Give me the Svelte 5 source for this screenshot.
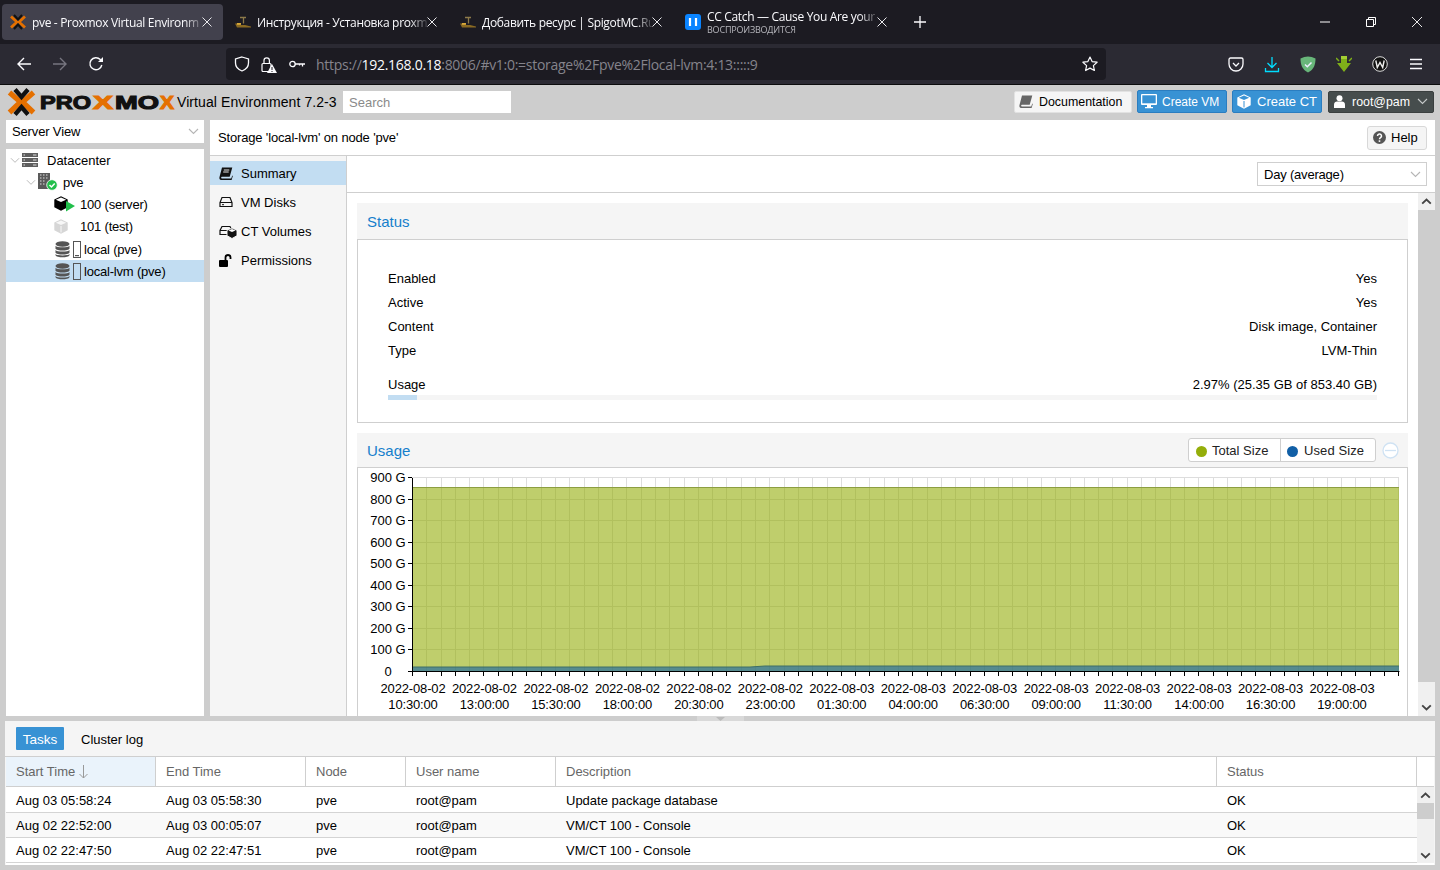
<script>
  const tabs = [
    { title: 'pve - Proxmox Virtual Environm', icon: 'px', active: true },
    { title: 'Инструкция - Установка proxm', icon: 'crane' },
    { title: 'Добавить ресурс | SpigotMC.Ru', icon: 'crane' },
    { title: 'CC Catch — Cause You Are your', sub: 'ВОСПРОИЗВОДИТСЯ', icon: 'pause' }
  ];
  const tree = [
    { label: 'Datacenter', level: 'l0', icon: 'dc' },
    { label: 'pve', level: 'l1', icon: 'node' },
    { label: '100 (server)', level: 'l2', icon: 'vm' },
    { label: '101 (test)', level: 'l2', icon: 'vmoff' },
    { label: 'local (pve)', level: 'l2', icon: 'st1' },
    { label: 'local-lvm (pve)', level: 'l2', icon: 'st2', selected: true }
  ];
  const nav = [
    { label: 'Summary', icon: 'book', active: true },
    { label: 'VM Disks', icon: 'hdd' },
    { label: 'CT Volumes', icon: 'ctv' },
    { label: 'Permissions', icon: 'unlock' }
  ];
  const status = [
    ['Enabled', 'Yes'],
    ['Active', 'Yes'],
    ['Content', 'Disk image, Container'],
    ['Type', 'LVM-Thin']
  ];
  const columns = [
    { label: 'Start Time', sorted: true },
    { label: 'End Time' },
    { label: 'Node' },
    { label: 'User name' },
    { label: 'Description' },
    { label: 'Status' }
  ];
  const tasks = [
    ['Aug 03 05:58:24', 'Aug 03 05:58:30', 'pve', 'root@pam', 'Update package database', 'OK'],
    ['Aug 02 22:52:00', 'Aug 03 00:05:07', 'pve', 'root@pam', 'VM/CT 100 - Console', 'OK'],
    ['Aug 02 22:47:50', 'Aug 02 22:47:51', 'pve', 'root@pam', 'VM/CT 100 - Console', 'OK']
  ];
  const labels = [
    ['2022-08-02', '10:30:00'], ['2022-08-02', '13:00:00'], ['2022-08-02', '15:30:00'],
    ['2022-08-02', '18:00:00'], ['2022-08-02', '20:30:00'], ['2022-08-02', '23:00:00'],
    ['2022-08-03', '01:30:00'], ['2022-08-03', '04:00:00'], ['2022-08-03', '06:30:00'],
    ['2022-08-03', '09:00:00'], ['2022-08-03', '11:30:00'], ['2022-08-03', '14:00:00'],
    ['2022-08-03', '16:30:00'], ['2022-08-03', '19:00:00']
  ];
  const x0 = 412.5, xStep = 14.295, y0 = 671.5, yStep = 21.53;
  const xTicks = Array.from({ length: 70 }, (_, i) => Math.round(x0 + i * xStep - 0.5) + 0.5);
  const yTicks = Array.from({ length: 10 }, (_, i) => ({
    y: Math.round(y0 - i * yStep - 0.5) + 0.5,
    label: i === 0 ? '0' : i * 100 + ' G'
  }));
</script>

{#snippet chev(cls)}
  <svg class={cls} width="11" height="7" viewBox="0 0 11 7"><path d="M1 1l4.500 4.500L10 1" fill="none" stroke="currentColor" stroke-width="1.100"/></svg>
{/snippet}
{#snippet scrollArrow(up)}
  <svg width="11" height="7" viewBox="0 0 11 7"><path d={up ? 'M1.200 5.600l4.300-4.100 4.300 4.100' : 'M1.200 1.400l4.300 4.100 4.300-4.100'} fill="none" stroke="#444" stroke-width="1.900"/></svg>
{/snippet}
{#snippet cube(color, bg)}
  <svg width="14" height="15" viewBox="0 0 14 15">
    <path d="M7 .3l6.700 3.200v7.800L7 14.800.3 11.300V3.500z" fill={color}/>
    <path d="M1.800 3.700L7 1.600l5.200 2.100L7 6z" fill={bg}/>
    <path d="M7 7v6.400" stroke={bg} stroke-width="1"/>
  </svg>
{/snippet}
{#snippet db()}
  <svg width="15" height="17" viewBox="0 0 15 17">
    <ellipse cx="7.500" cy="3" rx="7" ry="2.800" fill="#555"/>
    <path d="M.5 4.700c1 2 13 2 14 0v3c-1 2.400-13 2.400-14 0zM.5 9c1 2 13 2 14 0v2.700c-1 2.400-13 2.400-14 0zM.5 12.900c1 2 13 2 14 0v1.300c-1 2.700-13 2.700-14 0z" fill="#555"/>
  </svg>
{/snippet}
{#snippet treeIcon(name)}
  {#if name === 'dc'}
    <svg width="16" height="14" viewBox="0 0 16 14">
      <rect x="0" y="0" width="16" height="4" fill="#5f5f5f"/><rect x="0" y="5" width="16" height="4" fill="#5f5f5f"/><rect x="0" y="10" width="16" height="4" fill="#5f5f5f"/>
      <path d="M11 2h3.500M11 7h3.500M11 12h3.500M1.500 2h1.500M1.500 7h1.500M1.500 12h1.500" stroke="#ddd" stroke-width="1"/>
    </svg>
  {:else if name === 'node'}
    <svg width="20" height="18" viewBox="0 0 20 18">
      <rect x="0" y="0" width="12" height="16" fill="#5a5a5a"/>
      <path d="M2 2h1.500M5 2h1.500M8 2h1.500M2 5h1.500M5 5h1.500M8 5h1.500M2 8h1.500M5 8h1.500M2 11h1.500M5 11h1.500" stroke="#ddd" stroke-width="1.200"/>
      <circle cx="14" cy="12" r="5.300" fill="#21bf4b" stroke="#fff" stroke-width=".8"/>
      <path d="M11.500 12l2 2 3.200-3.600" fill="none" stroke="#fff" stroke-width="1.500"/>
    </svg>
  {:else if name === 'vm'}
    <svg width="22" height="16" viewBox="0 0 22 16">
      <path d="M7 .3l6.700 3.200v7.800L7 14.800.3 11.300V3.500z" fill="#000"/>
      <path d="M1.800 3.700L7 1.600l5.200 2.100L7 6z" fill="#fff"/>
      <path d="M12 5l9 5-9 5.600z" fill="#21bf4b"/>
    </svg>
  {:else if name === 'vmoff'}
    {@render cube('#d6d6d6', '#f7f7f7')}
  {:else}
    <span class="storage">
      {@render db()}
      <svg class="disk" width="8" height="17" viewBox="0 0 8 17">
        <rect x=".5" y=".5" width="7" height="16" fill="none" stroke="#555"/>
        {#if name === 'st1'}<rect x="2" y="14" width="4" height="1.200" fill="#555"/>{/if}
      </svg>
    </span>
  {/if}
{/snippet}
{#snippet navIcon(name)}
  {#if name === 'book'}
    <svg width="14" height="13" viewBox="0 0 14 13"><path d="M3 .5h10.300l-2.600 9.300H2.900c-1 0-1 1.700 0 1.700h9.400l.9-3 .6.400-1.200 4H2.300C.6 13 .1 11.300.5 9.900z" fill="#111"/><path d="M4.800 3h5.500M4.200 5h5.500" stroke="#fff" stroke-width=".9"/></svg>
  {:else if name === 'hdd'}
    <svg width="14" height="12" viewBox="0 0 14 12"><path d="M3 1.500h8l2 5v4H1v-4zM1 6.500h12" fill="none" stroke="#111" stroke-width="1.200"/><path d="M3 8.700h2" stroke="#111"/></svg>
  {:else if name === 'ctv'}
    <svg width="19" height="15" viewBox="0 0 19 15"><path d="M3 2.500h8l2 4v4H1v-4zM1 6.500h12" fill="none" stroke="#111" stroke-width="1.200"/><path d="M13 4l5 2.300v5.400L13 14.500l-5-2.800V6.300z" fill="#111" stroke="#fff" stroke-width=".9"/><path d="M9.500 6.500L13 5l3.500 1.500L13 8z" fill="#fff"/></svg>
  {:else}
    <svg width="14" height="13" viewBox="0 0 14 13"><rect x="0" y="6" width="9" height="7" rx="1" fill="#000"/><path d="M6.500 6V3.500a2.500 2.500 0 0 1 5 0v1.500" fill="none" stroke="#000" stroke-width="1.800"/></svg>
  {/if}
{/snippet}

<div class="app">
  <div class="tabstrip">
    {#each tabs as t}
      <div class="tab" class:active={t.active}>
        {#if t.icon === 'px'}
          <svg class="fav" width="16" height="16" viewBox="0 0 16 16"><path d="M1 2.500L7 8l-6 5.500M15 2.500L9 8l6 5.500" fill="none" stroke="#e57000" stroke-width="2.800"/><path d="M4 1l4 4.500L12 1M4 15l4-4.500L12 15" fill="none" stroke="#111" stroke-width="2"/></svg>
        {:else if t.icon === 'crane'}
          <svg class="fav" width="16" height="16" viewBox="0 0 16 16"><path d="M5 3.500h6M8.500 3.500v6" stroke="#8d7a4a" stroke-width="1.300"/><path d="M0 9.500h4l2 1.500h4l6 1.500v1H2z" fill="#8a6a22"/><rect x="2" y="9" width="4" height="1.800" fill="#d9a93a"/></svg>
        {:else}
          <svg class="fav" width="16" height="16" viewBox="0 0 16 16"><rect width="16" height="16" rx="3" fill="#0a84ff"/><path d="M5 4v8M11 4v8" stroke="#fff" stroke-width="2.200"/></svg>
        {/if}
        <div class="tabtext">
          <div class="tabtitle">{t.title}</div>
          {#if t.sub}<div class="tabsub">{t.sub}</div>{/if}
        </div>
        <svg class="tabclose" width="16" height="16" viewBox="0 0 16 16"><path d="M3.500 3.500l9 9M12.500 3.500l-9 9" stroke="#e8e8ec" stroke-width="1"/></svg>
      </div>
    {/each}
    <div class="newtab"><svg width="14" height="14" viewBox="0 0 14 14"><path d="M7 1v12M1 7h12" stroke="#fbfbfe" stroke-width="1.300"/></svg></div>
    <div class="winbtns">
      <div class="winbtn"><svg width="12" height="12" viewBox="0 0 12 12"><path d="M1 6h10" stroke="#fff"/></svg></div>
      <div class="winbtn"><svg width="12" height="12" viewBox="0 0 12 12"><path d="M1.500 3.500h7v7h-7zM3.500 3V1.500h7v7H9" fill="none" stroke="#fff"/></svg></div>
      <div class="winbtn"><svg width="12" height="12" viewBox="0 0 12 12"><path d="M1 1l10 10M11 1L1 11" stroke="#fff" stroke-width=".9"/></svg></div>
    </div>
  </div>

  <div class="toolbar">
    <div class="tbtn"><svg width="16" height="16" viewBox="0 0 16 16"><path d="M15 8H2M8 2L2 8l6 6" fill="none" stroke="#fbfbfe" stroke-width="1.400"/></svg></div>
    <div class="tbtn"><svg width="16" height="16" viewBox="0 0 16 16"><path d="M1 8h13M8 2l6 6-6 6" fill="none" stroke="#777680" stroke-width="1.400"/></svg></div>
    <div class="tbtn"><svg width="16" height="16" viewBox="0 0 16 16"><path d="M13.800 9a6 6 0 1 1-1.500-5.400L14 5.300" fill="none" stroke="#fbfbfe" stroke-width="1.400"/><path d="M15 1v5h-5z" fill="#fbfbfe"/></svg></div>
    <div class="urlbar">
      <svg class="u1" width="16" height="16" viewBox="0 0 16 16"><path d="M8 1l6.500 2v4c0 4-3 6.700-6.500 8-3.500-1.300-6.500-4-6.500-8V3z" fill="none" stroke="#fbfbfe" stroke-width="1.300"/></svg>
      <svg class="u2" width="16" height="17" viewBox="0 0 16 17"><rect x="1" y="7.500" width="9" height="8" rx="1" fill="none" stroke="#fbfbfe" stroke-width="1.200"/><path d="M3 7.500V4.500a2.700 2.700 0 0 1 5.400 0v3" fill="none" stroke="#fbfbfe" stroke-width="1.200"/><path d="M11 8l5 9H6z" fill="#fbfbfe"/><path d="M11 11v3M11 15v1" stroke="#1c1b22"/></svg>
      <svg class="u3" width="16" height="10" viewBox="0 0 16 10"><circle cx="3.500" cy="5" r="2.700" fill="none" stroke="#fbfbfe" stroke-width="1.300"/><path d="M6 5h10M13.500 5v2.500M10.500 5v1.500" stroke="#fbfbfe" stroke-width="1.300"/></svg>
      <div class="urltext">https://<span>192.168.0.18</span>:8006/#v1:0:=storage%2Fpve%2Flocal-lvm:4:13:::::9</div>
      <svg class="star" width="16" height="16" viewBox="0 0 16 16"><path d="M8 1l2.100 4.600 5 .6-3.700 3.400 1 4.900L8 12.100l-4.400 2.400 1-4.900L.9 6.200l5-.6z" fill="none" stroke="#fbfbfe" stroke-width="1.200" stroke-linejoin="round"/></svg>
    </div>
    <div class="tools">
      <div class="tool"><svg width="16" height="15" viewBox="0 0 16 15"><path d="M2.500 1h11c.8 0 1.500.7 1.500 1.500V7a7 7 0 0 1-14 0V2.500C1 1.700 1.700 1 2.500 1z" fill="none" stroke="#fbfbfe" stroke-width="1.300"/><path d="M5 6l3 3 3-3" fill="none" stroke="#fbfbfe" stroke-width="1.300"/></svg></div>
      <div class="tool"><svg width="16" height="17" viewBox="0 0 16 17"><path d="M8 1v10M3.500 7L8 11.500 12.500 7M1.500 12v3.500h13V12" fill="none" stroke="#00ddff" stroke-width="1.300"/></svg></div>
      <div class="tool"><svg width="16" height="17" viewBox="0 0 16 17"><path d="M8 .5c2.500 0 5 .8 7.500 2 0 6-1.500 11-7.500 14C2 13.500.5 8.500.5 2.500 3 1.300 5.500.5 8 .5z" fill="#68b67a"/><path d="M5 8.500l2.300 2.300L11.500 6.500" fill="none" stroke="#eef" stroke-width="1.500"/></svg></div>
      <div class="tool"><svg width="16" height="17" viewBox="0 0 16 17"><path d="M5 0h6v7h4l-7 9-7-9h4z" fill="#7fb019"/><path d="M0 2l3 3M16 2l-3 3" stroke="#7fb019" stroke-width="1.500"/><path d="M5 0h6v3H5z" fill="#a4cf33"/></svg></div>
      <div class="tool"><svg width="16" height="16" viewBox="0 0 16 16"><circle cx="8" cy="8" r="7.300" fill="#111" stroke="#ddd" stroke-width="1"/><path d="M3.800 4.500l1.500 7 2.700-5 2.700 5 1.500-7" fill="none" stroke="#eee" stroke-width="1.400"/></svg></div>
      <div class="tool"><svg width="14" height="12" viewBox="0 0 14 12"><path d="M1 1.500h12M1 6h12M1 10.500h12" stroke="#fbfbfe" stroke-width="1.300"/></svg></div>
    </div>
  </div>

  <header class="pxhead">
    <svg class="logo" width="170" height="30" viewBox="0 0 170 30">
      <path d="M2.500 5.500L13.500 15 2.500 25.500M26.500 5.500L15.500 15l11 10.500" fill="none" stroke="#e57000" stroke-width="5.300"/>
      <path d="M8 2.500l6.500 7.500L21 2.500M8 27.500l6.500-7.500 6.500 7.500" fill="none" stroke="#111" stroke-width="4.300"/>
      <text x="33" y="22" class="lg" textLength="51" lengthAdjust="spacingAndGlyphs">PRO</text>
      <text x="86" y="22" class="lg or" textLength="20" lengthAdjust="spacingAndGlyphs">X</text>
      <text x="108" y="22" class="lg" textLength="44" lengthAdjust="spacingAndGlyphs">MO</text>
      <text x="153" y="22" class="lg or" textLength="14" lengthAdjust="spacingAndGlyphs">X</text>
    </svg>
    <div class="version">Virtual Environment 7.2-3</div>
    <div class="search">Search</div>
    <div class="hbtns">
      <div class="hbtn doc">
        <svg width="14" height="13" viewBox="0 0 14 13"><path d="M3 .5h10.300l-2.600 9.300H2.900c-1 0-1 1.700 0 1.700h9.400l.9-3 .6.400-1.200 4H2.300C.6 13 .1 11.300.5 9.900z" fill="#666"/></svg>
        Documentation
      </div>
      <div class="hbtn blue">
        <svg width="16" height="15" viewBox="0 0 16 15"><rect x="0" y="0" width="16" height="11" rx="1" fill="#fff"/><rect x="1.300" y="1.300" width="13.400" height="8" fill="#3892d4"/><path d="M6 11h4v2h2v1.300H4V13h2z" fill="#fff"/></svg>
        Create VM
      </div>
      <div class="hbtn blue ct">
        {@render cube('#fff', '#3892d4')}
        Create CT
      </div>
      <div class="hbtn user">
        <svg width="11" height="13" viewBox="0 0 11 13"><circle cx="5.500" cy="3.200" r="3" fill="#fff"/><path d="M0 13V9.500C0 7.500 1.500 6.500 3 6.500h5c1.500 0 3 1 3 3V13z" fill="#fff"/></svg>
        <span>root@pam</span>
        {@render chev('userchev')}
      </div>
    </div>
  </header>

  <div class="workspace">
    <aside class="left">
      <div class="viewsel"><span>Server View</span>{@render chev('selchev')}</div>
      <div class="tree">
        {#each tree as n}
          <div class="node {n.level}" class:selected={n.selected}>
            {#if n.level !== 'l2'}<span class="exp">{@render chev('treechev')}</span>{/if}
            <span class="ticon {n.icon}">{@render treeIcon(n.icon)}</span>
            <span>{n.label}</span>
          </div>
        {/each}
      </div>
    </aside>

    <section class="content">
      <div class="title">
        <span class="ttext">Storage 'local-lvm' on node 'pve'</span>
        <div class="help">
          <svg width="13" height="13" viewBox="0 0 13 13"><circle cx="6.500" cy="6.500" r="6.500" fill="#555"/><path d="M4.500 5a2 2 0 1 1 3 1.700c-.7.400-1 .8-1 1.500" fill="none" stroke="#fff" stroke-width="1.500"/><rect x="5.700" y="9.300" width="1.600" height="1.600" fill="#fff"/></svg>
          Help
        </div>
      </div>
      <div class="cbody">
        <nav class="nav">
          {#each nav as item}
            <div class="navitem" class:active={item.active}>
              <span class="navicon">{@render navIcon(item.icon)}</span>
              {item.label}
            </div>
          {/each}
        </nav>
        <div class="main">
          <div class="mtool">
            <div class="rangesel"><span>Day (average)</span>{@render chev('selchev')}</div>
          </div>
          <div class="mscroll">
            <div class="panels">
              <div class="phead"><span class="ptitle">Status</span></div>
              <div class="statusbody">
                {#each status as [k, v]}
                  <div class="srow"><span>{k}</span><span>{v}</span></div>
                {/each}
                <div class="srow usage"><span>Usage</span><span>2.97% (25.35 GB of 853.40 GB)</span></div>
                <div class="progress"><div class="fill" style="width:2.97%"></div></div>
              </div>
              <div class="phead usagehead">
                <span class="ptitle">Usage</span>
                <div class="legend">
                  <div class="lg1"><i class="dot green"></i>Total Size</div>
                  <div class="lg2"><i class="dot bluedot"></i>Used Size</div>
                </div>
                <svg class="ctool" width="17" height="17" viewBox="0 0 17 17"><circle cx="8.500" cy="8.500" r="7.500" fill="#fff" stroke="#cfe2f3" stroke-width="1.300"/><path d="M3 8.500h11" stroke="#cfe2f3" stroke-width="1.300"/></svg>
              </div>
              <div class="chartbody">
                <svg class="chart" width="1049" height="248" viewBox="358 468 1049 248">
                  {#each yTicks as t}
                    <line x1="412" x2="1399" y1={t.y} y2={t.y} stroke="#ddd"/>
                    <line x1="408" x2="412" y1={t.y} y2={t.y} stroke="#000"/>
                    <text x="388" y={t.y + 4.500} text-anchor="middle" class="ct">{t.label}</text>
                  {/each}
                  {#each xTicks as x}
                    <line x1={x} x2={x} y1="478" y2="671" stroke="#ddd"/>
                    <line x1={x} x2={x} y1="671" y2="676" stroke="#000"/>
                  {/each}
                  <path d="M412.500 487.500H1399V671.500H412.500z" fill="#94ae0a" fill-opacity=".6"/>
                  <path d="M412.500 487.500H1399" stroke="#8c9e40" stroke-width="1"/>
                  <path d="M412.500 667H750L765 666H1399V671.500H412.500z" fill="#115fa6" fill-opacity=".6"/>
                  <path d="M412.500 667H750L765 666H1399" stroke="#3f6f66" fill="none"/>
                  <line x1="412.500" x2="412.500" y1="478" y2="672" stroke="#000"/>
                  <line x1="412" x2="1399.500" y1="671.500" y2="671.500" stroke="#000"/>
                  {#each labels as [d, t], i}
                    <text x={413 + i * 71.46} y="693" text-anchor="middle" class="ct xl">{d}</text>
                    <text x={413 + i * 71.46} y="709" text-anchor="middle" class="ct xl">{t}</text>
                  {/each}
                </svg>
              </div>
            </div>
            <div class="vscroll main-sb">
              <div class="sbtn">{@render scrollArrow(true)}</div>
              <div class="thumb t1"></div>
              <div class="sbtn">{@render scrollArrow(false)}</div>
            </div>
          </div>
        </div>
      </div>
    </section>
  </div>

  <div class="splitter"><div class="handle"><svg width="9" height="4" viewBox="0 0 9 4"><path d="M0 0h9L4.500 4z" fill="#bbb"/></svg></div></div>

  <section class="bottom">
    <div class="btabs">
      <div class="btab on">Tasks</div>
      <div class="btab">Cluster log</div>
    </div>
    <div class="ghead">
      {#each columns as c}
        <div class="gh" class:sorted={c.sorted}>
          {c.label}
          {#if c.sorted}<svg width="9" height="14" viewBox="0 0 9 14"><path d="M4.500 0v13M.5 9l4 4 4-4" fill="none" stroke="#999" stroke-width="1"/></svg>{/if}
        </div>
      {/each}
      <div class="ghfill"></div>
    </div>
    <div class="gbody">
      <div class="rows">
        {#each tasks as row, i}
          <div class="grow" class:alt={i === 1}>
            {#each row as cell}<div class="gc">{cell}</div>{/each}
          </div>
        {/each}
      </div>
      <div class="vscroll grid-sb">
        <div class="sbtn s16">{@render scrollArrow(true)}</div>
        <div class="thumb t2"></div>
        <div class="track"></div>
        <div class="sbtn s16">{@render scrollArrow(false)}</div>
      </div>
    </div>
  </section>
</div>

<style>
  :global(body) { margin: 0; background: #cdcdcd; }
  .app { width: 1440px; height: 870px; overflow: hidden; display: flex; flex-direction: column; background: #cdcdcd; font: 13px "Liberation Sans", Arial, sans-serif; color: #000; }

  .tabstrip { height: 44px; flex: none; background: #1c1b22; display: flex; padding-left: 2px; gap: 4px; box-sizing: border-box; color: #fbfbfe; font-family: "Open Sans", sans-serif; }
  .tab { width: 221px; height: 36px; margin-top: 4px; border-radius: 4px; display: flex; align-items: center; box-sizing: border-box; padding: 0 8px; }
  .tab.active { background: #42414d; }
  .fav { flex: none; margin-right: 6px; }
  .tabtext { flex: 1; min-width: 0; margin-right: -6px; padding-top: 1px; overflow: hidden; white-space: nowrap; mask-image: linear-gradient(to right, #000 88%, transparent 100%); -webkit-mask-image: linear-gradient(to right, #000 88%, transparent 100%); }
  .tabtitle { font-size: 12px; line-height: 16px; letter-spacing: -.33px; }
  .tabsub { font-size: 9px; line-height: 10px; color: #b5b5bb; margin-bottom: 1px; letter-spacing: -.2px; }
  .tabclose { flex: none; position: relative; }
  .newtab { width: 36px; height: 36px; margin-top: 4px; display: flex; align-items: center; justify-content: center; }
  .winbtns { margin-left: auto; display: flex; }
  .winbtn { width: 46px; height: 44px; display: flex; align-items: center; justify-content: center; }

  .toolbar { height: 41px; flex: none; box-sizing: border-box; background: #2b2a33; border-bottom: 1px solid #0c0c0d; display: flex; align-items: flex-start; padding-left: 6px; color: #fbfbfe; font-family: "Open Sans", sans-serif; }
  .tbtn { width: 36px; height: 40px; display: flex; align-items: center; justify-content: center; }
  .urlbar { margin-left: 112px; margin-top: 4px; width: 880px; height: 32px; background: #1c1b22; border-radius: 4px; display: flex; align-items: center; box-sizing: border-box; padding-left: 8px; }
  .u1 { margin-right: 11px; }
  .u2 { margin-right: 12px; }
  .u3 { margin-right: 11px; }
  .urltext { flex: 1; font-size: 14px; letter-spacing: -.28px; color: #85848c; white-space: nowrap; }
  .urltext span { color: #fbfbfe; }
  .star { margin-right: 8px; }
  .tools { margin-left: 112px; display: flex; }
  .tool { width: 36px; height: 40px; display: flex; align-items: center; justify-content: center; }

  .pxhead { height: 34px; flex: none; display: flex; align-items: center; padding-right: 6px; box-sizing: border-box; }
  .logo { margin-left: 7px; flex: none; }
  .lg { font: bold 19px "Liberation Sans", sans-serif; fill: #111; stroke: #111; stroke-width: 1.100; }
  .lg.or { fill: #e57000; stroke: #e57000; }
  .version { font-size: 14px; letter-spacing: .08px; white-space: nowrap; width: 166px; }
  .search { width: 168px; height: 22px; box-sizing: border-box; background: #fff; color: #8a8a8a; padding-left: 6px; line-height: 23px; }
  .hbtns { margin-left: auto; display: flex; gap: 5px; }
  .hbtn { height: 22px; box-sizing: border-box; border: 1px solid #e2e2e2; border-radius: 2px; display: flex; align-items: center; gap: 6px; padding-left: 5px; white-space: nowrap; background: #f5f5f5; }
  .doc { width: 118px; font-size: 12.4px; padding-left: 4px; }
  .blue { width: 90px; background: #3892d4; border-color: #2a7dc0; color: #fff; padding-left: 3px; height: 23px; margin-top: -.5px; font-size: 12px; gap: 5px; }
  .hbtn.ct { padding-left: 4px; gap: 6px; }
  .user { width: 106px; background: #464d4d; border-color: #3a3f3f; color: #fff; margin-left: 1px; gap: 7px; padding-left: 5px; font-size: 12.4px; }
  .userchev { color: #c5c9c9; }

  .workspace { height: 597px; flex: none; display: flex; padding: 1px 5px 0 6px; box-sizing: border-box; gap: 6px; }
  .left { width: 198px; flex: none; display: flex; flex-direction: column; gap: 6px; }
  .viewsel { height: 23px; background: #fff; display: flex; align-items: center; justify-content: space-between; padding: 0 5px 0 6px; flex: none; letter-spacing: -.15px; }
  .selchev { color: #b5b5b5; }
  .tree { flex: 1; background: #fff; }
  .node { height: 22px; display: flex; align-items: center; white-space: nowrap; }
  .node:nth-child(5) { height: 23px; padding-top: 1px; box-sizing: border-box; }
  .node.selected { background: #c2ddf2; }
  .l0 { padding-left: 4px; }
  .l1 { padding-left: 20px; letter-spacing: -.3px; }
  .l2 { padding-left: 48px; letter-spacing: -.2px; }
  .exp { width: 10px; margin-right: 2px; display: flex; color: #bbb; }
  .treechev { width: 10px; }
  .ticon { width: 25px; display: flex; align-items: center; flex: none; }
  .l2 .ticon { width: 26px; }
  .l2 .ticon.st1, .l2 .ticon.st2 { width: 30px; padding-left: 1px; box-sizing: border-box; }
  .storage { display: flex; gap: 3px; }

  .content { flex: 1; min-width: 0; display: flex; flex-direction: column; background: #fff; }
  .title { height: 36px; flex: none; box-sizing: border-box; border-bottom: 1px solid #cfcfcf; display: flex; align-items: center; justify-content: space-between; padding: 0 8px 0 8px; }
  .ttext { letter-spacing: -.16px; }
  .help { width: 60px; height: 24px; box-sizing: border-box; border: 1px solid #d8d8d8; border-radius: 3px; background: #f5f5f5; display: flex; align-items: center; gap: 5px; padding-left: 5px; }
  .cbody { flex: 1; display: flex; min-height: 0; }
  .nav { width: 136px; flex: none; box-sizing: border-box; background: #f5f5f5; padding-top: 5px; display: flex; flex-direction: column; gap: 5px; }
  .navitem { height: 24px; display: flex; align-items: center; white-space: nowrap; }
  .navitem.active { background: #c2ddf2; }
  .navicon { width: 31px; padding-left: 9px; box-sizing: border-box; display: flex; flex: none; align-items: center; }
  .main { flex: 1; min-width: 0; display: flex; flex-direction: column; border-left: 1px solid #cfcfcf; }
  .mtool { height: 37px; flex: none; box-sizing: border-box; border-bottom: 1px solid #cfcfcf; display: flex; justify-content: flex-end; align-items: flex-start; padding: 6px 8px 0 0; }
  .rangesel { width: 170px; height: 24px; box-sizing: border-box; border: 1px solid #cfcfcf; display: flex; align-items: center; justify-content: space-between; padding: 0 5px 0 6px; letter-spacing: -.2px; }
  .mscroll { flex: 1; min-height: 0; display: flex; }
  .panels { flex: 1; min-width: 0; padding: 10px 10px 0; overflow: hidden; }
  .phead { height: 36px; box-sizing: border-box; background: #f5f5f5; display: flex; align-items: center; padding-left: 10px; }
  .ptitle { color: #157fcc; font-size: 15px; }
  .statusbody { height: 184px; box-sizing: border-box; border: 1px solid #cfcfcf; padding: 26px 30px 0; margin-bottom: 10px; }
  .srow { height: 24px; display: flex; justify-content: space-between; align-items: center; }
  .usage { margin-top: 10px; height: 24px; }
  .progress { height: 5px; margin-top: -1px; background: #f5f5f5; }
  .fill { height: 100%; background: #c2ddf2; }
  .usagehead { height: 34px; position: relative; }
  .legend { margin-left: auto; margin-right: 32px; width: 188px; height: 24px; box-sizing: border-box; border: 1px solid #cfcfcf; border-radius: 3px; background: #fff; display: flex; color: #222; }
  .lg1, .lg2 { display: flex; align-items: center; padding-left: 7px; box-sizing: border-box; gap: 5px; }
  .lg1 { width: 92px; border-right: 1px solid #cfcfcf; }
  .lg2 { flex: 1; padding-left: 6px; gap: 6px; letter-spacing: .1px; }
  .dot { width: 11px; height: 11px; border-radius: 50%; display: block; margin-top: 2px; }
  .green { background: #94ae0a; }
  .bluedot { background: #115fa6; }
  .ctool { position: absolute; right: 9px; top: 9px; }
  .chartbody { height: 249px; box-sizing: border-box; border: 1px solid #cfcfcf; border-bottom: 0; }
  .chart { display: block; }
  .ct { font: 13px "Liberation Sans", sans-serif; fill: #000; }
  .xl { letter-spacing: -.15px; }

  .vscroll { width: 17px; flex: none; display: flex; flex-direction: column; background: #f0f0f0; }
  .sbtn { height: 17px; flex: none; display: flex; align-items: center; justify-content: center; background: #f0f0f0; }
  .thumb { background: #cdcdcd; }
  .t1 { flex: 1; margin-bottom: 17px; }
  .main-sb .sbtn:last-child { margin-top: -17px; height: 34px; align-items: flex-end; padding-bottom: 5px; box-sizing: border-box; }
  .t2 { height: 16px; flex: none; }
  .track { flex: 1; }

  .splitter { height: 5px; flex: none; display: flex; justify-content: center; }
  .handle { width: 47px; height: 5px; background: #d9d9d9; display: flex; justify-content: center; align-items: center; }

  .bottom { margin: 0 5px; height: 144px; flex: none; background: #f5f5f5; display: flex; flex-direction: column; }
  .btabs { height: 36px; flex: none; box-sizing: border-box; border-bottom: 1px solid #cfcfcf; display: flex; align-items: flex-start; padding: 6px 0 0 11px; }
  .btab { height: 23px; line-height: 25px; padding: 0 7px; margin-right: 3px; white-space: nowrap; }
  .btab.on { background: #3892d4; color: #fff; border-radius: 1px; width: 48px; box-sizing: border-box; font-size: 13.5px; text-align: center; padding: 0; margin-right: 10px; }
  .ghead { height: 30px; flex: none; margin: 0 1px; box-sizing: border-box; background: #fff; border-bottom: 1px solid #cfcfcf; display: grid; grid-template-columns: 150px 150px 100px 150px 661px 200px 1fr; }
  .gh { color: #666; border-right: 1px solid #cfcfcf; padding-left: 10px; display: flex; align-items: center; gap: 4px; }
  .gh.sorted { background: #eaf3fb; }
  .gbody { flex: 1; display: flex; margin: 0 1px; background: #fff; min-height: 0; }
  .rows { flex: 1; min-width: 0; }
  .grow { height: 25px; box-sizing: border-box; border-bottom: 1px solid #d4d4d4; display: grid; grid-template-columns: 150px 150px 100px 150px 661px 200px; align-items: center; }
  .grow:first-child { height: 26px; padding-top: 1px; }
  .grow.alt { background: #f9f9f9; }
  .gc { padding-left: 10px; white-space: nowrap; }
  .grid-sb { height: 76px; }
  .s16 { height: 16px; }
</style>
